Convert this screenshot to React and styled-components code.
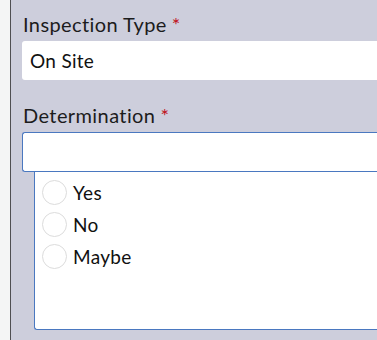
import React from 'react';
import styled, { createGlobalStyle } from 'styled-components';

const GlobalStyle = createGlobalStyle`
  html, body {
    margin: 0;
    padding: 0;
    background: #f4f5f5;
    font-family: Lato, 'Noto Sans', sans-serif;
  }
  * { box-sizing: border-box; }
`;

const Page = styled.div`
  display: flex;
  width: 377px;
  height: 340px;
  overflow: hidden;
`;

const Gutter = styled.div`
  width: 11px;
  flex: none;
  background: #f4f5f5;
  border-right: 1px solid #4f4f52;
`;

const Panel = styled.div`
  flex: 1;
  background: #cdcedc;
  padding: 12px 0 0 11px;
  display: flex;
  flex-direction: column;
`;

const Field = styled.div`
  display: flex;
  flex-direction: column;
  margin-bottom: ${(p) => p.$gap || 0}px;
`;

const Label = styled.div`
  font-size: 20px;
  letter-spacing: 0.4px;
  color: #1c1c1c;
  line-height: 24px;
  padding-left: 1px;
  margin-bottom: 5px;
`;

const Required = styled.span`
  color: #c0121b;
  margin-left: 5px;
`;

const Input = styled.div`
  height: ${(p) => (p.$focused ? 40 : 39)}px;
  border: ${(p) => (p.$focused ? '1px solid #4a78c0' : 'none')};
  border-right: none;
  border-radius: 3px 0 0 3px;
  background: #fff;
  display: flex;
  align-items: center;
  padding-left: 8px;
  font-size: 19px;
  letter-spacing: 0.3px;
  color: #111;
`;

const Listbox = styled.div`
  margin-left: 12px;
  height: 158px;
  background: #fff;
  border: 1px solid #4a78c0;
  border-top: none;
  border-right: none;
  border-radius: 0 0 0 3px;
  padding: 8px 0 0 7px;
  display: flex;
  flex-direction: column;
  gap: 7px;
`;

const Option = styled.label`
  display: flex;
  align-items: center;
  gap: 6px;
  font-size: 19px;
  letter-spacing: 0.3px;
  color: #111;
  height: 25px;
`;

const Radio = styled.span`
  width: 25px;
  height: 25px;
  border: 1px solid #dcdcdc;
  border-radius: 50%;
  background: #fff;
  flex: none;
`;

const options = ['Yes', 'No', 'Maybe'];

export default function App() {
  return (
    <>
      <GlobalStyle />
      <Page>
        <Gutter />
        <Panel>
          <Field $gap={23}>
            <Label>
              Inspection Type<Required>*</Required>
            </Label>
            <Input>On Site</Input>
          </Field>
          <Field>
            <Label>
              Determination<Required>*</Required>
            </Label>
            <Input $focused />
            <Listbox>
              {options.map((o) => (
                <Option key={o}>
                  <Radio />
                  {o}
                </Option>
              ))}
            </Listbox>
          </Field>
        </Panel>
      </Page>
    </>
  );
}
